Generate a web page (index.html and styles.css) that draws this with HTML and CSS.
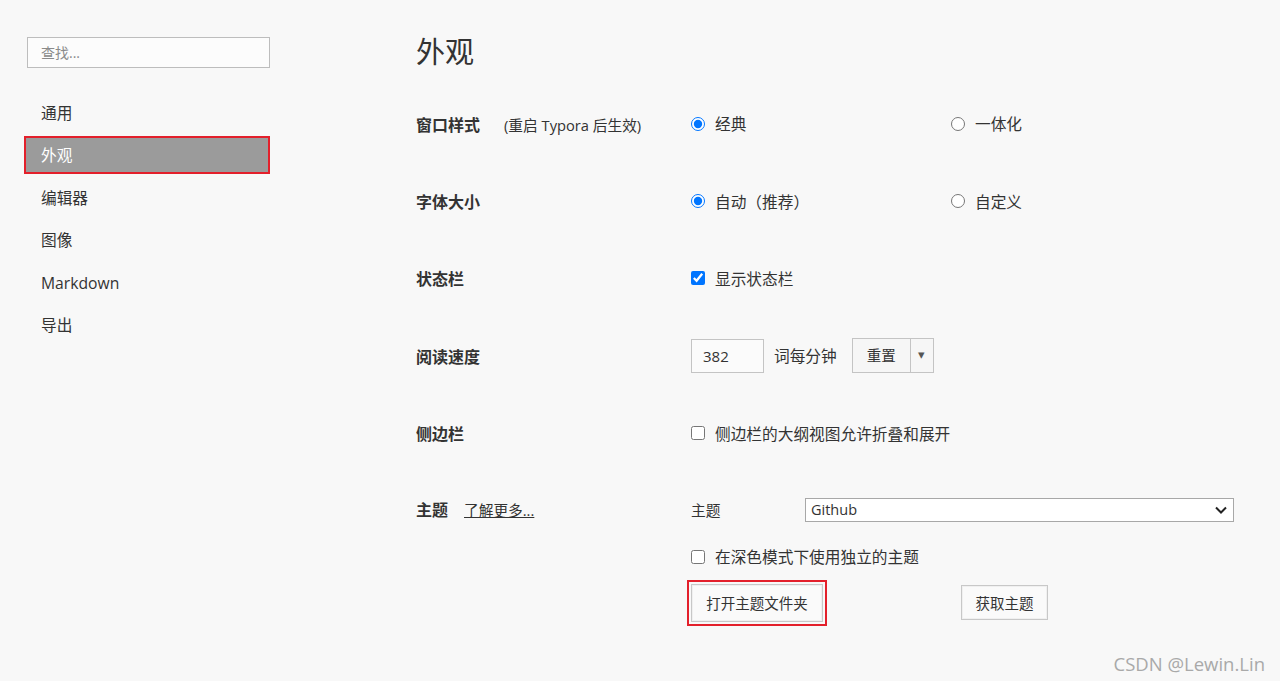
FILE: index.html
```html
<!DOCTYPE html>
<html lang="zh-CN">
<head>
  <meta charset="UTF-8">
  <title>偏好设置</title>
  <link rel="stylesheet" href="styles.css">
</head>
<body>

<div class="app">
  <aside class="sidebar">
    <div class="search">查找...</div>
    <ul class="nav">
      <li>通用</li>
      <li class="active">外观</li>
      <li>编辑器</li>
      <li>图像</li>
      <li>Markdown</li>
      <li>导出</li>
    </ul>
  </aside>

  <main class="main">
    <h1>外观</h1>

    <div class="row">
      <div class="label"><b>窗口样式</b><span class="hint">(重启 Typora 后生效)</span></div>
      <label class="opt"><input type="radio" name="win" checked> 经典</label>
      <label class="opt"><input type="radio" name="win"> 一体化</label>
    </div>

    <div class="row">
      <div class="label"><b>字体大小</b></div>
      <label class="opt"><input type="radio" name="size" checked> 自动（推荐）</label>
      <label class="opt"><input type="radio" name="size"> 自定义</label>
    </div>

    <div class="row">
      <div class="label"><b>状态栏</b></div>
      <label class="opt"><input type="checkbox" checked> 显示状态栏</label>
    </div>

    <div class="row">
      <div class="label"><b>阅读速度</b></div>
      <div class="speed">
        <div class="num">382</div>
        <span>词每分钟</span>
        <div class="split">
          <span class="split-main">重置</span>
          <span class="split-arrow">▾</span>
        </div>
      </div>
    </div>

    <div class="row">
      <div class="label"><b>侧边栏</b></div>
      <label class="opt"><input type="checkbox"> 侧边栏的大纲视图允许折叠和展开</label>
    </div>

    <div class="theme">
      <div class="label"><b>主题</b><a class="more">了解更多...</a></div>
      <div class="theme-body">
        <div class="theme-line">
          <span class="theme-name">主题</span>
          <div class="select">
            <span>Github</span>
            <svg width="14" height="10" viewBox="0 0 14 10"><path d="M2 2.5 L7 7.5 L12 2.5" fill="none" stroke="#222" stroke-width="2"/></svg>
          </div>
        </div>
        <label class="opt"><input type="checkbox"> 在深色模式下使用独立的主题</label>
        <div class="btns">
          <button class="btn marked">打开主题文件夹</button>
          <button class="btn get">获取主题</button>
        </div>
      </div>
    </div>
  </main>
</div>

<div class="mark">CSDN @Lewin.Lin</div>

</body>
</html>
```

FILE: styles.css
```css
* {
  box-sizing: border-box;
}
body {
  margin: 0;
  background: #f8f8f8;
  color: #333;
  font-family: 'Open Sans', 'Noto Sans CJK SC', sans-serif;
  font-size: 15.7px;
  height: 681px;
  overflow: hidden;
}
.app {
  display: flex;
}
.sidebar {
  width: 270px;
  padding: 37px 0 0 26px;
}
.search {
  margin-left: 1px;
  height: 31px;
  border: 1px solid #bdbdbd;
  background: #fcfcfc;
  color: #8a8a8a;
  font-size: 14px;
  line-height: 29px;
  padding-left: 13px;
}
.nav {
  list-style: none;
  margin: 28px 0 0;
  padding: 0;
}
.nav li {
  height: 34px;
  line-height: 34px;
  padding-left: 15px;
  margin-bottom: 8.4px;
  color: #333;
}
.nav li.active {
  background: #9b9b9b;
  color: #fff;
  width: 242px;
  outline: 2px solid #e3202b;
  outline-offset: 0;
}
.main {
  margin-left: 146px;
  flex: 1;
  padding-top: 30px;
}
h1 {
  margin: 0 0 11px;
  font-size: 29px;
  font-weight: normal;
  line-height: 44px;
  color: #333;
}
.row {
  display: grid;
  grid-template-columns: 275px 260px 1fr;
  align-items: center;
  height: 77.4px;
}
.label b {
  font-weight: bold;
  font-size: 16px;
}
.hint {
  margin-left: 24px;
  font-size: 14.7px;
}
.opt {
  display: flex;
  align-items: center;
  gap: 10px;
  white-space: nowrap;
}
.opt input {
  margin: 0;
  width: 14px;
  height: 14px;
}
.speed {
  display: flex;
  align-items: center;
  grid-column: 2 / 4;
}
.num {
  width: 73px;
  height: 34px;
  border: 1px solid #c4c4c4;
  background: #fbfbfb;
  line-height: 32px;
  padding-left: 11px;
  font-size: 15px;
}
.speed > span {
  margin: 0 15px 0 10px;
}
.split {
  display: flex;
  height: 35px;
  border: 1px solid #c4c4c4;
  background: #f6f6f6;
}
.split-main {
  width: 58px;
  text-align: center;
  line-height: 33px;
  font-size: 14.5px;
  border-right: 1px solid #c4c4c4;
}
.split-arrow {
  width: 22px;
  text-align: center;
  line-height: 31px;
  font-size: 13px;
  color: #555;
}
.theme {
  display: grid;
  grid-template-columns: 275px 1fr;
  margin-top: 26px;
  margin-right: 46px;
}
.theme > .label {
  line-height: 24px;
}
.more {
  margin-left: 16px;
  font-size: 14.7px;
  text-decoration: underline;
  color: #333;
}
.theme-line {
  display: flex;
  align-items: center;
  height: 24px;
}
.theme-name {
  width: 114px;
  font-size: 14.7px;
}
.select {
  flex: 1;
  height: 24px;
  border: 1px solid #a8a8a8;
  background: #fff;
  display: flex;
  justify-content: space-between;
  align-items: center;
  padding: 0 5px 0 5px;
  font-size: 14.5px;
}
.theme-body .opt {
  margin-top: 25px;
  height: 20px;
}
.btns {
  display: flex;
  align-items: center;
  margin-top: 17px;
}
.btn {
  font-family: 'Open Sans', 'Noto Sans CJK SC', sans-serif;
  font-size: 14.5px;
  color: #333;
  background: #fafafa;
  border: 1px solid #c8c8c8;
  box-shadow: inset 0 0 0 1px #f0f0f0;
  padding: 0;
}
.btn.marked {
  width: 132px;
  height: 38px;
  outline: 2px solid #e3202b;
  outline-offset: 2px;
}
.btn.get {
  width: 87px;
  height: 35px;
  margin-left: 138px;
}
.mark {
  position: absolute;
  right: 15px;
  bottom: 5px;
  color: #a9a9a9;
  font-size: 18.5px;
  font-family: 'Open Sans', sans-serif;
}
```
